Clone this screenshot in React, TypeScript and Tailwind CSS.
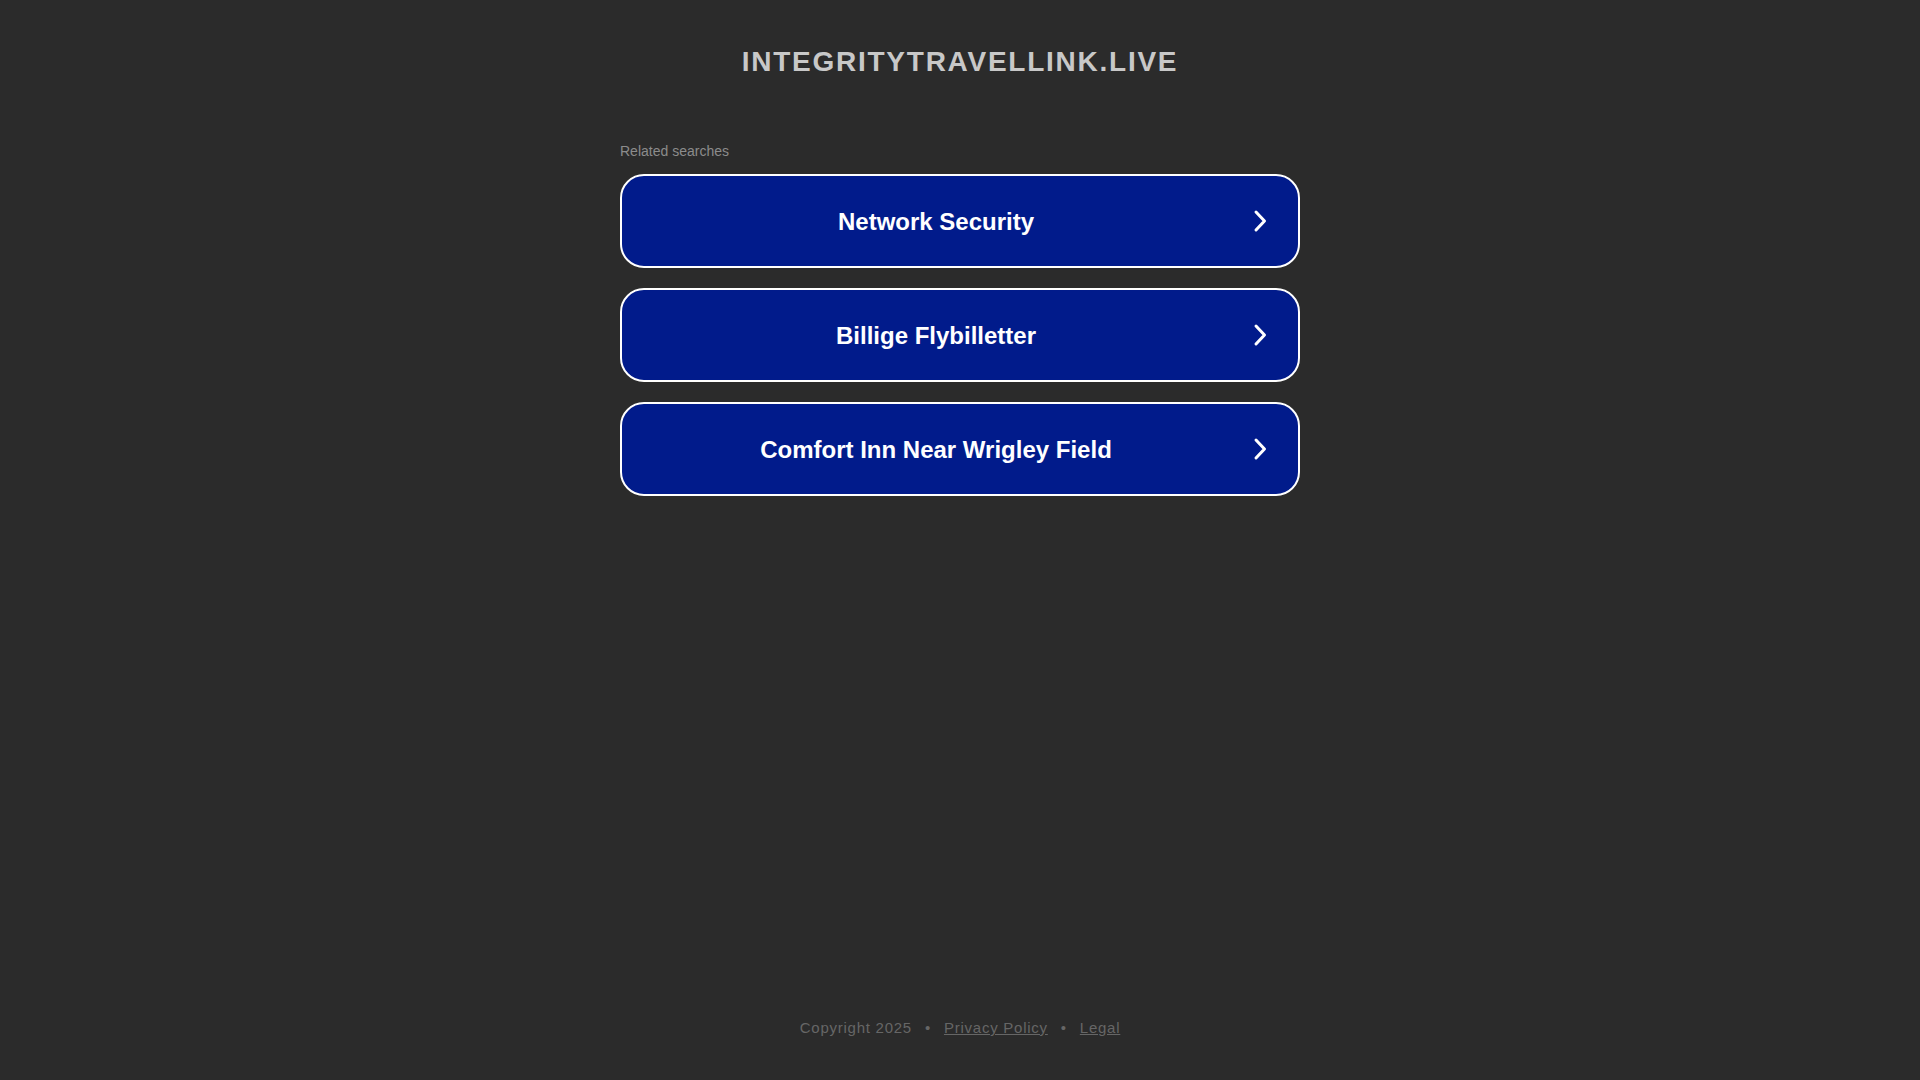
import React from 'react';

// --- Related search links shown on the parked page ---
const searches: string[] = ['Network Security', 'Billige Flybilletter', 'Comfort Inn Near Wrigley Field'];

const Chevron: React.FC = () => (
  <svg width="24" height="24" viewBox="0 0 24 24" fill="none" aria-hidden="true">
    <path d="M8 3 L16.5 12 L8 21" stroke="#ffffff" strokeWidth="3" strokeLinecap="round" strokeLinejoin="round" />
  </svg>
);

const SearchButton: React.FC<{ label: string }> = ({ label }) => (
  <a
    href="#"
    className="flex h-[94px] w-full items-center rounded-[24px] border-2 border-white bg-[#011b8b] pl-[2px] pr-[26px] text-white no-underline hover:bg-[#0a2aa8]"
  >
    <span className="flex-1 pt-[2px] text-center text-[24px] font-bold leading-[28px]">{label}</span>
    <span className="flex w-6 items-center justify-center">
      <Chevron />
    </span>
  </a>
);

const App: React.FC = () => {
  return (
    <div className="flex min-h-screen w-full flex-col bg-[#2b2b2b] font-['Liberation_Sans',Arial,sans-serif]">
      <header className="pt-[48px] text-center">
        <h1 className="text-[28px] font-bold uppercase leading-[28px] tracking-[1.75px] text-[#c8c8c8]">
          integritytravellink.live
        </h1>
      </header>

      <main className="mx-auto mt-[65px] w-[680px]">
        <p className="text-[14px] leading-[20px] text-[#8c8c8c]">Related searches</p>
        <div className="mt-[13px] flex flex-col gap-5">
          {searches.map((s) => (
            <SearchButton key={s} label={s} />
          ))}
        </div>
      </main>

      <footer className="mt-auto pb-[42px] text-center text-[15px] leading-[20px] tracking-[0.75px] text-[#666666]">
        <span>Copyright 2025</span>
        <span className="px-[13px]">•</span>
        <a href="#" className="text-[#666666] underline">Privacy Policy</a>
        <span className="px-[13px]">•</span>
        <a href="#" className="text-[#666666] underline">Legal</a>
      </footer>
    </div>
  );
};

export default App;
